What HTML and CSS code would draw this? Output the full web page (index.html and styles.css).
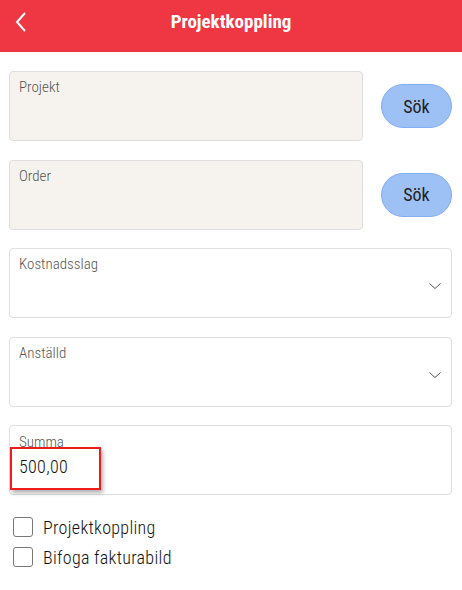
FILE: index.html
```html
<!DOCTYPE html>
<html lang="sv">
<head>
<meta charset="utf-8">
<link rel="stylesheet" href="styles.css">
</head>
<body>
<header class="topbar">
  <svg class="back" width="14" height="22" viewBox="0 0 14 22"><path d="M11 2 L3 11 L11 20" fill="none" stroke="#fff" stroke-width="2"/></svg>
  <h1 class="title">Projektkoppling</h1>
</header>
<main class="form">
  <div class="row">
    <div class="field field-grey"><span class="label">Projekt</span></div>
    <button class="btn">Sök</button>
  </div>
  <div class="row">
    <div class="field field-grey"><span class="label">Order</span></div>
    <button class="btn">Sök</button>
  </div>
  <div class="field field-select"><span class="label">Kostnadsslag</span>
    <svg class="chev" width="12" height="7" viewBox="0 0 12 7"><path d="M0.5 0.5 L6 5.5 L11.5 0.5" fill="none" stroke="#555" stroke-width="1"/></svg>
  </div>
  <div class="field field-select"><span class="label">Anställd</span>
    <svg class="chev" width="12" height="7" viewBox="0 0 12 7"><path d="M0.5 0.5 L6 5.5 L11.5 0.5" fill="none" stroke="#555" stroke-width="1"/></svg>
  </div>
  <div class="field field-sum"><span class="label label-sum">Summa</span>
    <span class="value">500,00</span>
    <span class="highlight"></span>
  </div>
  <div class="checks">
    <label class="check"><span class="box"></span>Projektkoppling</label>
    <label class="check"><span class="box"></span>Bifoga fakturabild</label>
  </div>
</main>
</body>
</html>
```
FILE: styles.css
```css
* { box-sizing: border-box; }
body {
  margin: 0;
  background: #fff;
  font-family: "Roboto Condensed", Roboto, "Liberation Sans", sans-serif;
  width: 462px;
}
.topbar {
  height: 52px;
  background: #ef3744;
  display: flex;
  justify-content: center;
  position: relative;
}
.back {
  position: absolute;
  left: 14px;
  top: 11px;
}
.title {
  margin: 0;
  color: #fff;
  font-size: 19px;
  line-height: 22px;
  font-weight: 700;
  padding-top: 11px;
}
.form {
  padding: 19px 10px 0 9px;
  display: flex;
  flex-direction: column;
  gap: 18.6px;
}
.row {
  display: flex;
  align-items: center;
  gap: 18px;
}
.field {
  height: 70px;
  border: 1px solid #dedede;
  border-radius: 4px;
  background: #fff;
  padding: 6px 9px;
  position: relative;
}
.field-grey {
  flex: 1;
  background: #f6f3ef;
}
.label {
  display: block;
  font-size: 15px;
  line-height: 18px;
  font-weight: 300;
  color: #555;
}
.btn {
  width: 71px;
  height: 44px;
  border-radius: 22px;
  background: #9dc0f5;
  border: 1px solid #83aef2;
  font-family: inherit;
  font-size: 18px;
  color: #222;
  padding: 0;
}
.chev {
  position: absolute;
  right: 10px;
  top: 34px;
}
.field-sum { padding-top: 7px; }
.value {
  display: block;
  font-size: 18px;
  line-height: 22px;
  font-weight: 300;
  color: #111;
  margin-top: 5px;
  letter-spacing: 0.3px;
}
.highlight {
  position: absolute;
  left: 0;
  top: 21px;
  width: 91px;
  height: 43px;
  border: 2px solid #ee1c1c;
  box-shadow: 2px 3px 4px rgba(0,0,0,0.3);
}
.checks {
  display: flex;
  flex-direction: column;
  gap: 9px;
  padding-left: 4px;
  margin-top: 3px;
}
.check {
  display: flex;
  align-items: center;
  gap: 10px;
  font-size: 18px;
  line-height: 21px;
  font-weight: 300;
  color: #111;
  letter-spacing: 0.3px;
}
.box {
  width: 20px;
  height: 20px;
  border: 1.5px solid #777;
  border-radius: 3px;
}
```
